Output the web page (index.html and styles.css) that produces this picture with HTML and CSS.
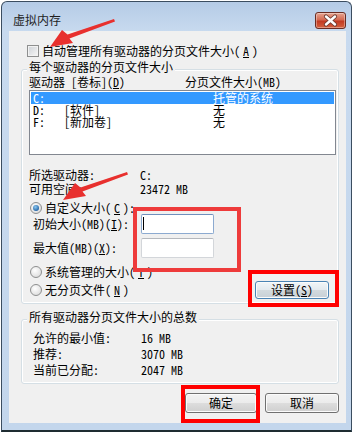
FILE: index.html
```html
<!DOCTYPE html>
<html lang="zh-CN">
<head>
    <meta charset="UTF-8">
    <title>虚拟内存</title>
    <link rel="stylesheet" href="styles.css">
</head>
<body>
    <div class="window">
        <div class="titlebar">
            <span class="title">虚拟内存</span>
            <div class="close">
                <svg width="29" height="15" viewBox="0 0 29 15">
                    <path d="M10 3.5 L19 11.5 M19 3.5 L10 11.5" stroke="#6b3a30" stroke-width="4.2" stroke-linecap="round"/>
                    <path d="M10 3.5 L19 11.5 M19 3.5 L10 11.5" stroke="#fff" stroke-width="2.4" stroke-linecap="round"/>
                </svg>
            </div>
        </div>
        <div class="client">
            <div class="check-row"><span class="checkbox"></span>自动管理所有驱动器的分页文件大小(<u>A</u>)</div>

            <div class="group">
                <div class="group-title">每个驱动器的分页文件大小</div>
                <div class="list-head"><span>驱动器 [卷标](<u>D</u>)</span><span>分页文件大小(MB)</span></div>
                <div class="listbox">
                    <div class="list-row selected"><span>C:</span><span></span><span>托管的系统</span></div>
                    <div class="list-row"><span>D:</span><span>[软件]</span><span>无</span></div>
                    <div class="list-row"><span>F:</span><span>[新加卷]</span><span>无</span></div>
                </div>
                <div class="info">
                    <span>所选驱动器:</span><span>C:</span>
                    <span>可用空间:</span><span>23472 MB</span>
                </div>
                <div class="radio-row custom"><span class="radio checked"></span>自定义大小(<u>C</u>):</div>
                <div class="field-row">
                    <span class="field-label">初始大小(MB)(<u>I</u>):</span>
                    <div class="field focused"><span class="caret"></span></div>
                </div>
                <div class="field-row">
                    <span class="field-label">最大值(MB)(<u>X</u>):</span>
                    <div class="field"></div>
                </div>
                <div class="radio-row system"><span class="radio"></span>系统管理的大小(<u>T</u>)</div>
                <div class="radio-set-row">
                    <div class="radio-row"><span class="radio"></span>无分页文件(<u>N</u>)</div>
                    <div class="btn btn-set">设置(<u>S</u>)</div>
                </div>
            </div>

            <div class="group group-total">
                <div class="group-title">所有驱动器分页文件大小的总数</div>
                <div class="totals">
                    <span>允许的最小值:</span><span>16 MB</span>
                    <span>推荐:</span><span>3070 MB</span>
                    <span>当前已分配:</span><span>2047 MB</span>
                </div>
            </div>

            <div class="dialog-buttons">
                <div class="btn btn-ok">确定</div>
                <div class="btn btn-cancel">取消</div>
            </div>
        </div>
    </div>

    <!-- annotation marks drawn over the dialog -->
    <div class="mark mark-fields"></div>
    <div class="mark mark-set"></div>
    <div class="mark mark-ok"></div>
    <svg class="arrows" width="352" height="432" viewBox="0 0 352 432">
        <polygon id="arrow" points="114,19 67.5,34.5 62,30 50,47 73,43 69.5,38.5 115,21.5" fill="#e8302e"/>
        <use href="#arrow" transform="translate(13,153)"/>
    </svg>
</body>
</html>
```

FILE: styles.css
```css
* {
    margin: 0;
    padding: 0;
    box-sizing: border-box;
}
body {
    width: 352px;
    height: 432px;
    overflow: hidden;
    position: relative;
    background-color: #fff;
    font-family: "Noto Sans Mono CJK SC", "Noto Sans CJK SC", sans-serif;
    font-size: 12px;
    line-height: 12px;
    color: #000;
}
.window {
    margin: 1px 0 0 1px;
    width: 351px;
    border: 1px solid #3b4d60;
    border-bottom: 2px solid #1e2c31;
    border-radius: 6px 6px 0 0;
    padding: 0 5px 7px 7px;
    background: linear-gradient(#b5cbe6, #c8daef 30px, #c3d6ec);
}
.titlebar {
    height: 29px;
    display: flex;
    justify-content: space-between;
    padding-left: 4px;
}
.title {
    margin-top: 12px;
    height: 12px;
    color: #1e1e1e;
}
.close {
    margin-top: 10px;
    width: 31px;
    height: 17px;
    border: 1px solid #6a2c22;
    border-radius: 3px;
    background: linear-gradient(#e7a591, #d46a52 45%, #c23a22 55%, #d5613f);
    box-shadow: inset 0 0 0 1px rgba(255,255,255,0.35);
}
.close svg {
    display: block;
}
.client {
    height: 392px;
    background-color: #f0f0f0;
    padding: 14px 7px 0 12px;
}
.check-row {
    display: flex;
    align-items: center;
    gap: 3px;
    height: 12px;
    margin-left: 6px;
}
.checkbox {
    width: 12px;
    height: 12px;
    border: 1px solid #8e8f8f;
    background: linear-gradient(135deg, #cdd1d6, #f7f7f7);
    box-shadow: inset 0 0 0 1px #f2f2f2;
}
.group {
    margin-top: 12px;
    border: 1px solid #d5dfe5;
    border-radius: 3px;
    box-shadow: inset 0 0 0 1px #fff;
    padding: 0 2px 4px 7px;
}
.group-title {
    width: max-content;
    height: 12px;
    margin: -9px 0 0 -2px;
    padding: 0 2px;
    background-color: #f0f0f0;
}
.list-head {
    margin-top: 3px;
    display: grid;
    grid-template-columns: 156px auto;
    height: 12px;
}
.listbox {
    margin-top: 2px;
    height: 65px;
    border: 1px solid #828790;
    background-color: #fff;
    padding: 1px;
}
.list-row {
    display: grid;
    grid-template-columns: 31px 149px auto;
    height: 12px;
    padding-left: 2px;
}
.list-row.selected {
    background-color: #3399ff;
    color: #fff;
}
.info {
    margin-top: 13px;
    display: grid;
    grid-template-columns: 111px auto;
    grid-auto-rows: 14px;
    line-height: 14px;
}
.radio-row {
    display: flex;
    align-items: center;
    gap: 3px;
    height: 12px;
    margin-left: 1px;
}
.radio {
    position: relative;
    width: 12px;
    height: 12px;
    border-radius: 50%;
    border: 1px solid #8e8f8f;
    background: radial-gradient(circle at 40% 35%, #fff, #d4d4d4);
}
.radio.checked::after {
    content: "";
    position: absolute;
    left: 2px;
    top: 2px;
    width: 6px;
    height: 6px;
    border-radius: 50%;
    background: radial-gradient(circle at 40% 35%, #8cc8f0, #1b5c9f 80%);
}
.custom {
    margin-top: 6px;
}
.field-row {
    display: flex;
    align-items: center;
    height: 20px;
    padding-left: 4px;
}
.field-row + .field-row {
    margin-top: 4px;
}
.field-label {
    width: 108px;
}
.field {
    width: 73px;
    height: 20px;
    background-color: #fff;
    border: 1px solid #d3d6da;
    border-top-color: #b5b8bd;
    border-radius: 2px;
    padding: 2px 0 0 1px;
}
.field.focused {
    border-color: #8caad0;
    border-top-color: #6f90bd;
}
.caret {
    display: block;
    width: 1px;
    height: 13px;
    background-color: #000;
}
.system {
    margin-top: 8px;
}
.radio-set-row {
    margin-top: 3px;
    height: 18px;
    display: flex;
    align-items: center;
    justify-content: space-between;
    padding-right: 7px;
}
.btn {
    display: flex;
    align-items: center;
    justify-content: center;
    border: 1px solid #707070;
    border-radius: 3px;
    background: linear-gradient(#f3f3f3, #ebebeb 50%, #dddddd 51%, #cfcfcf);
    box-shadow: inset 0 0 0 1px #fbfbfb;
}
.btn-set {
    width: 74px;
    height: 18px;
    border-color: #4a83b4;
    background: linear-gradient(#f1f5f8, #e3e9ee 50%, #d3dade 51%, #c8d0d6);
}
.group-total {
    margin-top: 15px;
    padding-bottom: 5px;
}
.totals {
    margin-top: 7px;
    display: grid;
    grid-template-columns: 108px auto;
    grid-auto-rows: 16px;
    line-height: 16px;
    padding-left: 4px;
}
.dialog-buttons {
    margin-top: 9px;
    display: flex;
    justify-content: flex-end;
    gap: 8px;
}
.btn-ok {
    width: 72px;
    height: 20px;
}
.btn-cancel {
    width: 74px;
    height: 20px;
}
.mark {
    position: absolute;
    border: 4px solid #f00;
}
.mark-fields {
    left: 133px;
    top: 207px;
    width: 108px;
    height: 65px;
    border-color: #ee3b3b;
}
.mark-set {
    left: 248px;
    top: 270px;
    width: 91px;
    height: 37px;
}
.mark-ok {
    left: 181px;
    top: 385px;
    width: 79px;
    height: 38px;
}
.arrows {
    position: absolute;
    left: 0;
    top: 0;
    pointer-events: none;
}
```
